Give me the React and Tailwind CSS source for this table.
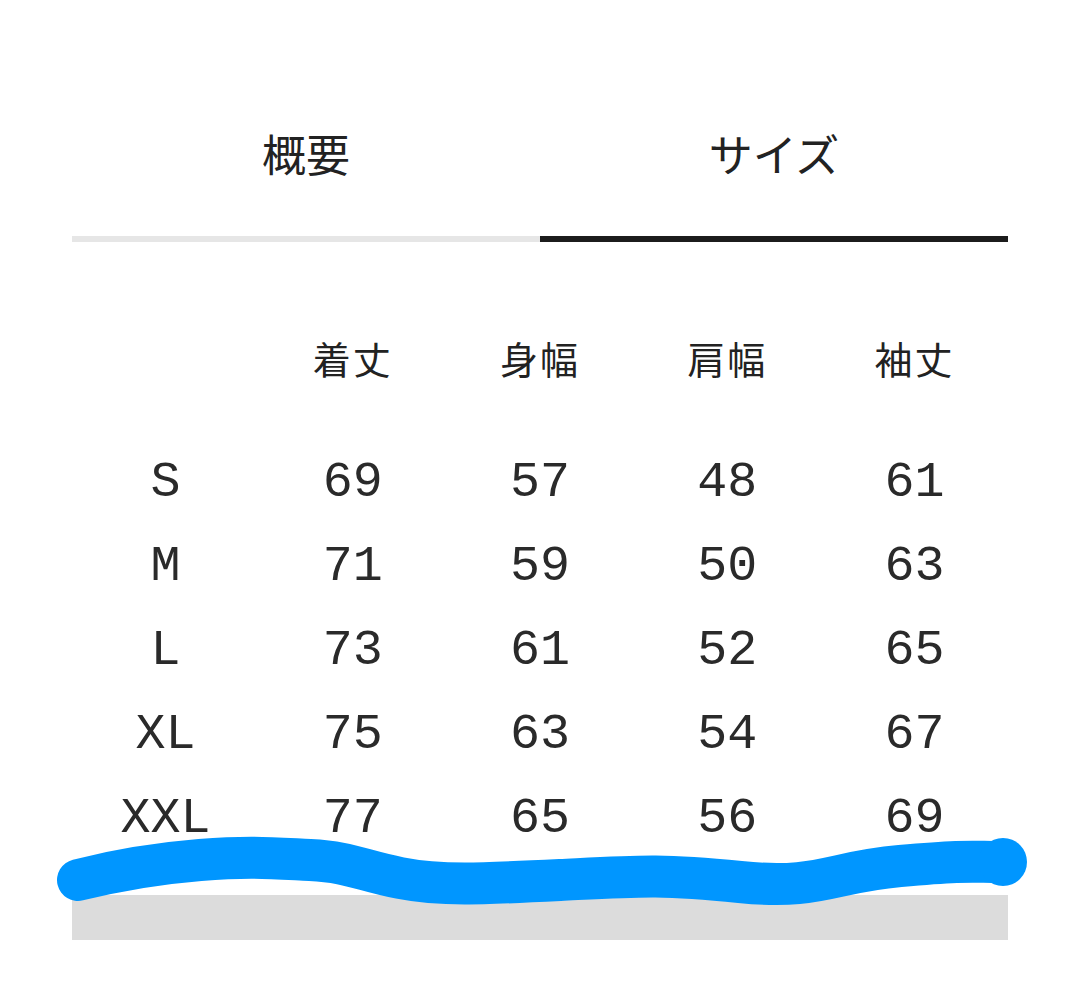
import React from 'react';

const headers = ['着丈', '身幅', '肩幅', '袖丈'];
const rows = [
  ['S', '69', '57', '48', '61'],
  ['M', '71', '59', '50', '63'],
  ['L', '73', '61', '52', '65'],
  ['XL', '75', '63', '54', '67'],
  ['XXL', '77', '65', '56', '69'],
];

const cjk = "font-['Noto_Sans_CJK_JP',sans-serif]";
const mono = "font-['Liberation_Mono','Noto_Sans_CJK_JP',monospace]";

const App = () => {
  return (
    <div className="relative w-[1080px] h-[982px] bg-white px-[72px] pt-[120px] text-[#222222] overflow-hidden">
      {/* Tabs */}
      <div className={`flex ${cjk}`}>
        <div className="flex-1 text-center text-[44px] leading-[66px] pb-[50px] border-b-[6px] border-[#e6e6e6]">
          概要
        </div>
        <div className="flex-1 text-center text-[44px] leading-[66px] pb-[50px] border-b-[6px] border-[#1c1c1c]">
          サイズ
        </div>
      </div>

      {/* Size table */}
      <div className="mt-[85px]">
        <div className={`grid grid-cols-5 h-[60px] items-center text-[38px] tracking-[2px] ${cjk}`}>
          <div />
          {headers.map((h) => (
            <div key={h} className="text-center">{h}</div>
          ))}
        </div>
        <div className="mt-[54px]">
          {rows.map((r) => (
            <div key={r[0]} className={`grid grid-cols-5 h-[84px] items-center text-[50px] text-[#2a2a2a] ${mono}`}>
              {r.map((c, i) => (
                <div key={i} className="text-center leading-none">{c}</div>
              ))}
            </div>
          ))}
        </div>
        <div className="mt-[34px] h-[45px] bg-[#dcdcdc]" />
      </div>

      {/* Blue marker scribble */}
      <svg className="absolute left-0 top-0 pointer-events-none" width="1080" height="982">
        <path
          d="M78 880 C110 872 150 864 200 860 S270 858 310 860 S360 870 400 878 S480 884 560 880 S660 874 740 882 S830 872 900 866 S970 862 1000 862"
          fill="none"
          stroke="#0096ff"
          strokeWidth="42"
          strokeLinecap="round"
          strokeLinejoin="round"
        />
        <circle cx="1003" cy="862" r="24" fill="#0096ff" />
      </svg>
    </div>
  );
};

export default App;
